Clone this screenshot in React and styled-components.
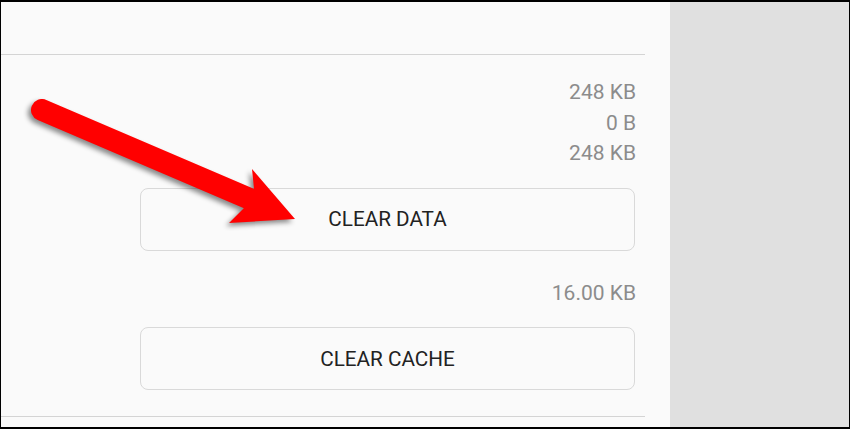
import styled, { createGlobalStyle } from "styled-components";

const Global = createGlobalStyle`
  html, body { margin: 0; padding: 0; background: #ffffff; }
  body { font-family: Roboto, "Liberation Sans", sans-serif; }
`;

function App() {
  return (
    <Shot>
      <Global />
      <Frame>
        <Panel>
          <TopSpace />
          <Divider />
          <Section>
            <Values>
              <Value>248 KB</Value>
              <Value>0 B</Value>
              <Value>248 KB</Value>
            </Values>
            <ActionButton>CLEAR DATA</ActionButton>
            <Values $top={27}>
              <Value>16.00 KB</Value>
            </Values>
            <ActionButton $top={19}>CLEAR CACHE</ActionButton>
          </Section>
          <Divider $top={26} />
        </Panel>
        <Side />
      </Frame>
      <Arrow viewBox="0 0 850 429" width="850" height="429">
        <g style={{ filter: "drop-shadow(-3px 3px 2.5px rgba(0,0,0,0.45))" }}>
          <line x1="42" y1="110" x2="250" y2="199" stroke="#ff0000" strokeWidth="22" strokeLinecap="round" />
          <polygon points="252,169 295,219 229,223 244,208 250,199 254,189" fill="#ff0000" />
        </g>
      </Arrow>
    </Shot>
  );
}

const Shot = styled.div`
  position: relative;
  width: 850px;
  height: 429px;
`;

const Frame = styled.div`
  box-sizing: border-box;
  width: 850px;
  height: 429px;
  display: flex;
  border-style: solid;
  border-color: #000;
  border-width: 2px 1px 2px 1px;
`;

const Panel = styled.div`
  width: 669px;
  background: #fafafa;
  display: flex;
  flex-direction: column;
  padding-right: 25px;
  box-sizing: border-box;
`;

const Side = styled.div`
  flex: 1;
  background: #e0e0e0;
`;

const TopSpace = styled.div`
  height: 52px;
`;

const Divider = styled.div`
  height: 1px;
  background: #d4d4d4;
  margin-top: ${(p) => p.$top || 0}px;
`;

const Section = styled.div`
  display: flex;
  flex-direction: column;
  align-items: flex-end;
  padding-right: 9px;
`;

const Values = styled.div`
  display: flex;
  flex-direction: column;
  align-items: flex-end;
  margin-top: ${(p) => p.$top || 22}px;
`;

const Value = styled.div`
  font-size: 21px;
  line-height: 30.5px;
  color: #8c8c8c;
`;

const ActionButton = styled.button`
  box-sizing: border-box;
  width: 495px;
  height: 63px;
  margin-top: ${(p) => p.$top || 19}px;
  margin-right: 1px;
  background: #fafafa;
  border: 1px solid #d9d9d9;
  border-radius: 8px;
  font-family: Roboto, "Liberation Sans", sans-serif;
  font-size: 20.7px;
  color: #222222;
  padding: 0;
`;

const Arrow = styled.svg`
  position: absolute;
  top: 0;
  left: 0;
  pointer-events: none;
  overflow: visible;
`;

export default App;
